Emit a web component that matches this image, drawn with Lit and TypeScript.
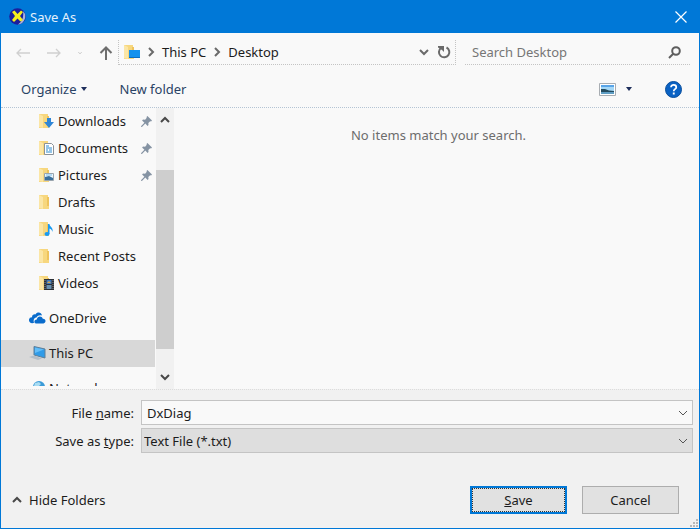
import { LitElement, html, svg, css, nothing } from "lit";
import { customElement } from "lit/decorators.js";
import { classMap } from "lit/directives/class-map.js";

type Overlay = "downloads" | "documents" | "pictures" | "music" | "videos" | "desktop" | "none";

interface Place {
  label: string;
  overlay: Overlay;
  pinned?: boolean;
}

const QUICK_ACCESS: Place[] = [
  { label: "Downloads", overlay: "downloads", pinned: true },
  { label: "Documents", overlay: "documents", pinned: true },
  { label: "Pictures", overlay: "pictures", pinned: true },
  { label: "Drafts", overlay: "none" },
  { label: "Music", overlay: "music" },
  { label: "Recent Posts", overlay: "none" },
  { label: "Videos", overlay: "videos" },
];

const overlays = {
  none: nothing,
  downloads: svg`<path d="M8 5h4v4h3l-5 6-5-6h3z" fill="#2f86d6"/>`,
  documents: svg`<path d="M5.500 3.500h7l2 2v9h-9z" fill="#fff" stroke="#8b9299"/>
    <path d="M7 6h3M7 8h6M7 10h2M10 10h3M7 12h6" stroke="#2b8bd0"/>`,
  pictures: svg`<path d="M5.500 6.500h9v7h-9z" fill="#eaf5fd" stroke="#9aa5ae"/>
    <path d="M6 10l4-1 4 2v2H6z" fill="#3a6f9c"/><path d="M7 8h6" stroke="#79bdec"/>`,
  music: svg`<ellipse cx="8" cy="13" rx="2.500" ry="2" fill="#1a9af0"/>
    <path d="M9 3h1.500c0 3 4 3 3 8-.5-2-1.500-3-3-3.500V13H9z" fill="#1a9af0"/>`,
  videos: svg`<path d="M5 4h10v11H5z" fill="#2c3036"/><path d="M7.500 5h5v4h-5z" fill="#3e79bd"/>
    <path d="M7.500 10h5v4h-5z" fill="#6a91b0"/><path d="M8 8l2-2 2 2z" fill="#d8a649"/>
    <path d="M6 5v10M14 5v10" stroke="#8c9094" stroke-dasharray="1 1"/>`,
  desktop: svg`<path d="M5 6h11v8H5z" fill="#1492ee"/><path d="M5 13h11v1H5z" fill="#0c6fc0"/>`,
};

const folder = (overlay: Overlay) => html`
  <svg class="icon" viewBox="0 0 16 16" aria-hidden="true">
    <path d="M0 1h9v2h1v12H0z" fill="#f7d77e" />
    <path d="M0 1l4 2v12l-4-1z" fill="#fbe6a6" />
    <path d="M8 3h2v9H8z" fill="#eec35c" />
    ${overlays[overlay]}
  </svg>`;

const pin = html`
  <svg class="pin" viewBox="0 0 12 12" aria-hidden="true">
    <path d="M7 0l5 5-1 1-1-.3L8 7.500l.2 2.300-1 1-2.500-2.500L1 12l-1-.2.2-1L3.700 7.300 1.200 4.800l1-1 2.300.2L6.300 2 6 1z" fill="#8593a3" />
  </svg>`;

const chevron = (dir: string, cls: string) => html`
  <svg class="chev ${cls}" viewBox="0 0 10 10" aria-hidden="true">
    <path d=${dir === "down" ? "M1 3l4 4 4-4" : dir === "up" ? "M1 7l4-4 4 4" : "M3 1l4 4-4 4"} />
  </svg>`;

@customElement("app-root")
export class AppRoot extends LitElement {
  static styles = css`
    :host {
      display: block;
      height: 100vh;
      font: 13px/20px "Segoe UI", "Noto Sans", "Open Sans", sans-serif;
      color: #1c1c1c;
    }
    * { box-sizing: border-box; }
    button, input, select { font: inherit; color: inherit; margin: 0; border-radius: 0; }
    button { background: none; border: 0; padding: 0; display: flex; align-items: center; cursor: default; }
    svg { display: block; flex: none; }
    .window {
      height: 100%;
      display: flex;
      flex-direction: column;
      background: #f9f9f9;
      border: 1px solid #0078d7;
      border-top: 0;
    }
    .title {
      display: flex; align-items: center; gap: 4px;
      height: 33px; padding: 0 12px 0 8px;
      flex: none;
      background: #0078d7; color: #e4f1fc;
    }
    .title h1 { flex: 1; margin: 0; font-size: 13px; font-weight: 400; }
    .app { width: 17px; height: 17px; }
    .close { width: 12px; height: 12px; stroke: #fff; fill: none; stroke-width: 1.2; }

    .nav { display: flex; align-items: center; padding: 7px 9px 0 15px; flex: none; }
    .arrows { display: flex; align-items: center; gap: 17px; width: 102px; flex: none; }
    .arrow { width: 14px; height: 14px; fill: none; stroke: #d0d0d0; stroke-width: 1.3; }
    .arrow.up { stroke: #6e6e6e; stroke-width: 2; }
    .chev { width: 10px; height: 10px; fill: none; stroke: #6a6a6a; stroke-width: 2; }
    .chev.faint { width: 4px; height: 4px; stroke: #b8b8b8; }
    .chev.thin { stroke: #555; stroke-width: 1; }
    .chev.dark { stroke: #484848; }
    .box {
      display: flex; align-items: center; height: 25px;
      border-bottom: 1px dotted #c4c4c4;
    }
    .address {
      flex: 1; gap: 8px; padding: 0 3px 0 5px;
      border-left: 1px dotted #c4c4c4; border-right: 1px dotted #c4c4c4;
    }
    .crumbs { display: flex; align-items: center; gap: 6px; flex: 1; }
    .crumbs a { color: inherit; text-decoration: none; }
    .refresh { width: 15px; height: 15px; }
    .search { width: 225px; margin-left: 9px; padding: 0 9px 0 7px; }
    .search input {
      flex: 1; min-width: 0; border: 0; padding: 0; background: none; outline: 0;
    }
    .search input::placeholder { color: #767676; opacity: 1; }
    .lens { width: 13px; height: 13px; fill: none; stroke: #5e5e5e; stroke-width: 2; }

    .toolbar {
      display: flex; align-items: center; flex: none;
      height: 43px; padding: 6px 17px 0 20px;
      border-bottom: 1px dotted #b4c4d4;
      color: #2a4365;
    }
    .organize { gap: 4px; margin-right: 33px; }
    .spacer { flex: 1; }
    .caret { width: 6px; height: 4px; fill: #1f2f5c; }
    .view { gap: 10px; margin-right: 33px; }
    .thumb { width: 17px; height: 13px; }
    .help { width: 17px; height: 17px; }

    .main { flex: 1; min-height: 0; display: flex; }
    .tree { width: 154px; flex: none; overflow: hidden; margin-bottom: 3px; }
    .tree ul { list-style: none; margin: 0; padding: 0; }
    .tree .root { margin-top: 8px; }
    .row { display: flex; align-items: center; gap: 3px; width: 100%; height: 27px; padding: 0 3px 1px 38px; }
    .row.top { padding-left: 28px; }
    .row.selected { background: #d8d8d8; }
    .row .name { flex: 1; text-align: left; }
    .icon { width: 16px; height: 16px; }
    .row.top .icon { width: 17px; }
    .pin { width: 11px; height: 11px; }
    .scroll {
      width: 18px; flex: none; margin-left: 1px;
      display: flex; flex-direction: column; background: #f1f1f1;
    }
    .scroll button { justify-content: center; height: 24px; flex: none; }
    .track { flex: 1; padding: 38px 0 16px; display: flex; }
    .grip { flex: 1; background: #cecece; }
    .files { flex: 1; padding-top: 17px; text-align: center; color: #6d6d6d; }
    .files p { margin: 0; padding-left: 4px; }

    .bottom { flex: none; background: #f1f1f1; padding: 10px 6px 14px 11px; border-top: 1px dotted #dcdcdc; position: relative; }
    .fields { display: grid; grid-template-columns: 122px 1fr; gap: 3px 7px; align-items: center; }
    .fields label { text-align: right; }
    .combo { display: grid; align-items: center; }
    .combo > * { grid-area: 1 / 1; }
    .combo .chev { justify-self: end; margin-right: 5px; pointer-events: none; }
    .combo input, .combo select {
      width: 100%; height: 25px; outline: 0; appearance: none;
      border: 1px solid #c4c4c4; padding: 0 24px 0 5px; background: #f9f9f9;
    }
    .combo select { background: #dedede; padding-left: 2px; }
    .actions { display: flex; align-items: center; gap: 15px; padding: 33px 14px 0 0; }
    .hide { gap: 7px; margin-right: auto; }
    .push {
      width: 97px; height: 28px; justify-content: center;
      background: #e1e1e1; border: 1px solid #adadad;
    }
    .push.default { border: 2px solid #0078d7; outline: 1px dotted #333; outline-offset: -3px; }
    .size { position: absolute; right: 1px; bottom: 1px; width: 9px; height: 9px; fill: #b8b8b8; }
  `;

  private place(p: Place) {
    return html`<li>
      <button class="row">${folder(p.overlay)}<span class="name">${p.label}</span>${p.pinned ? pin : nothing}</button>
    </li>`;
  }

  private root(label: string, icon: unknown, selected = false) {
    return html`<li class="root">
      <button class=${classMap({ row: true, top: true, selected })}>
        <svg class="icon" viewBox="0 0 17 16" aria-hidden="true">${icon}</svg>
        <span class="name">${label}</span>
      </button>
    </li>`;
  }

  render() {
    return html`
      <div class="window" role="dialog" aria-label="Save As">
        <header class="title">
          <svg class="app" viewBox="0 0 17 17" aria-hidden="true">
            <circle cx="8.500" cy="8.500" r="8.300" fill="#1b1f9c" />
            <path d="M14 3a8 8 0 0 1-5 13.500c4-3 6-7 5-13.500z" fill="#a9b4dc" />
            <path d="M3 4l2.500-1.500L8.500 6 12 2.500 14 4l-3 4 3 4-2.500 1.500-3-3L5 14l-2-2 3-4z" fill="#f6ef1c" />
          </svg>
          <h1>Save As</h1>
          <button aria-label="Close"><svg class="close" viewBox="0 0 12 12"><path d="M.5.5l11 11M11.500.5l-11 11" /></svg></button>
        </header>

        <div class="nav">
          <div class="arrows">
            <button aria-label="Back"><svg class="arrow" viewBox="0 0 14 14"><path d="M14 7H1M5 3L1 7l4 4" /></svg></button>
            <button aria-label="Forward"><svg class="arrow" viewBox="0 0 14 14"><path d="M0 7h13M9 3l4 4-4 4" /></svg></button>
            <button aria-label="Recent locations">${chevron("down", "faint")}</button>
            <button aria-label="Up"><svg class="arrow up" viewBox="0 0 14 14"><path d="M7 14V1.500M1.500 7L7 1.500 12.500 7" /></svg></button>
          </div>
          <div class="box address">
            <div class="crumbs">
              ${folder("desktop")} ${chevron("right", "")}
              <a href="#this-pc">This PC</a> ${chevron("right", "")}
              <a href="#desktop">Desktop</a>
            </div>
            <button aria-label="Previous locations">${chevron("down", "")}</button>
            <button aria-label="Refresh">
              <svg class="refresh" viewBox="0 0 15 15">
                <path d="M9.500 2.500a5.200 5.200 0 1 1-5.500.5" fill="none" stroke="#6a6a6a" stroke-width="2" />
                <path d="M1 1h6v6L5 5 1 2.500z" fill="#6a6a6a" />
              </svg>
            </button>
          </div>
          <div class="box search">
            <input type="search" placeholder="Search Desktop" aria-label="Search Desktop" />
            <svg class="lens" viewBox="0 0 13 13" aria-hidden="true"><circle cx="8" cy="5" r="3.800" /><path d="M5.500 7.500L1 12" /></svg>
          </div>
        </div>

        <div class="toolbar">
          <button class="organize">Organize <svg class="caret" viewBox="0 0 6 4"><path d="M0 0h6L3 4z" /></svg></button>
          <button>New folder</button>
          <span class="spacer"></span>
          <button class="view" aria-label="Change your view">
            <svg class="thumb" viewBox="0 0 17 13">
              <path d="M.5.5h16v12H.5z" fill="#fff" stroke="#a8adb2" />
              <path d="M2 2h13v9H2z" fill="#a5d8f7" />
              <path d="M2 2h13v2H2z" fill="#5aa5e8" />
              <path d="M2 6l4 0 4 1.500 5 .5v1H2z" fill="#244b5e" />
              <path d="M2 9h13v2H2z" fill="#5f9ec4" />
            </svg>
            <svg class="caret" viewBox="0 0 6 4"><path d="M0 0h6L3 4z" /></svg>
          </button>
          <button aria-label="Help">
            <svg class="help" viewBox="0 0 17 17">
              <circle cx="8.500" cy="8.500" r="8" fill="#0a62c4" stroke="#0b4f9c" />
              <path d="M6 6.300C6 3 11.300 3.200 11.300 6.200c0 2-2.600 2-2.600 4" fill="none" stroke="#fff" stroke-width="1.700" />
              <path d="M7.800 11.500h1.900v2H7.800z" fill="#fff" />
            </svg>
          </button>
        </div>

        <div class="main">
          <nav class="tree" aria-label="Folders">
            <ul>
              ${QUICK_ACCESS.map((p) => this.place(p))}
              ${this.root("OneDrive", svg`<path d="M4 13a3 3 0 0 1-4-2.500 3 3 0 0 1 3-3.300C3 5 5 4 6.500 4.500 8 1.500 12.500 2 13 5.500c-3-1-5 .5-5.500 2C5 7.500 4 10 5 13z" fill="#0a6ccc"/>
                <path d="M7 13.500c-2.500-.5-2-4 .8-4 .4-3.500 5-4 6-.8 3.500-.2 3.500 4.500.7 4.800z" fill="#0a6ccc"/>`)}
              ${this.root("This PC", svg`<path d="M5 1.500l11 2.500v9L5 10z" fill="#2f9be8" stroke="#5f7f98"/>
                <path d="M6 2.500l9 2L6 8z" fill="#62bdf8"/><path d="M0 12l5-1.500 8 3-4 1.500z" fill="#b4bec8"/>`, true)}
              ${this.root("Network", svg`<circle cx="10" cy="7" r="6" fill="#3b9bd8"/><path d="M6 3l4-1 2 2-3 3-4-1z" fill="#a9dcf2"/>
                <path d="M0 6l8 2v6l-8-2z" fill="#5aaee6"/>`)}
            </ul>
          </nav>
          <div class="scroll">
            <button aria-label="Scroll up">${chevron("up", "dark")}</button>
            <div class="track"><div class="grip"></div></div>
            <button aria-label="Scroll down">${chevron("down", "dark")}</button>
          </div>
          <section class="files"><p>No items match your search.</p></section>
        </div>

        <footer class="bottom">
          <div class="fields">
            <label for="name">File <u>n</u>ame:</label>
            <div class="combo"><input id="name" type="text" .value=${"DxDiag"} accesskey="n" />${chevron("down", "thin")}</div>
            <label for="type">Save as <u>t</u>ype:</label>
            <div class="combo">
              <select id="type" accesskey="t"><option>Text File (*.txt)</option></select>${chevron("down", "thin")}
            </div>
          </div>
          <div class="actions">
            <button class="hide">${chevron("up", "dark")} Hide Folders</button>
            <button class="push default" accesskey="s"><span><u>S</u>ave</span></button>
            <button class="push">Cancel</button>
          </div>
          <svg class="size" viewBox="0 0 9 9" aria-hidden="true">
            <path d="M7 1h2v2H7zM4 4h2v2H4zM7 4h2v2H7zM1 7h2v2H1zM4 7h2v2H4zM7 7h2v2H7z" />
          </svg>
        </footer>
      </div>
    `;
  }
}
